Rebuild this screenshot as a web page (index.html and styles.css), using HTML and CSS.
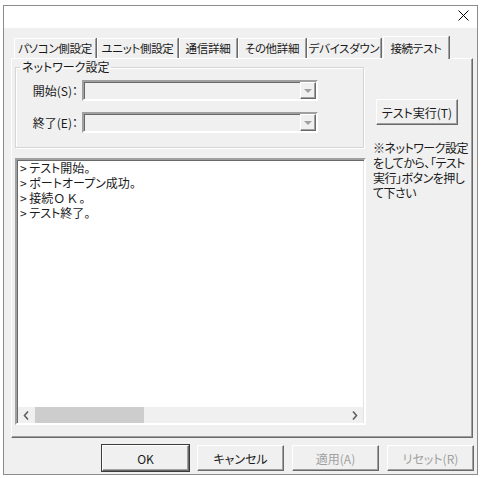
FILE: index.html
```html
<!DOCTYPE HTML>
<html>
<head>
    <meta charset="utf-8">
    <title>接続テスト</title>
    <link rel="stylesheet" href="styles.css">
</head>
<body>
<div class="window">
    <div class="titlebar">
        <div class="close">
            <svg width="11" height="11" viewBox="0 0 11 11">
                <path d="M 0.5,0.5 L 10.5,10.5 M 10.5,0.5 L 0.5,10.5" stroke="#000" stroke-width="1"/>
            </svg>
        </div>
    </div>
    <div class="tabs">
        <div class="tab t-pc">パソコン側設定</div>
        <div class="tab t-unit">ユニット側設定</div>
        <div class="tab t-comm">通信詳細</div>
        <div class="tab t-other">その他詳細</div>
        <div class="tab t-down">デバイスダウン</div>
        <div class="tab t-test selected">接続テスト</div>
    </div>
    <div class="panel">
        <div class="left-col">
            <fieldset class="group">
                <legend>ネットワーク設定</legend>
                <div class="row">
                    <span class="label">開始(S)：</span>
                    <div class="combo"><div class="drop"><span class="arrow"></span></div></div>
                </div>
                <div class="row">
                    <span class="label">終了(E)：</span>
                    <div class="combo"><div class="drop"><span class="arrow"></span></div></div>
                </div>
            </fieldset>
            <div class="log">
                <div class="log-text">
                    <div>&gt; テスト開始。</div>
                    <div>&gt; ポートオープン成功。</div>
                    <div>&gt; 接続<span class="fullwidth">ＯＫ</span>。</div>
                    <div>&gt; テスト終了。</div>
                </div>
                <div class="hscroll">
                    <div class="sbtn">
                        <svg width="7" height="9" viewBox="0 0 7 9"><path d="M 5,0.5 L 1.5,4.5 L 5,8.5" fill="none" stroke="#606060" stroke-width="1.6"/></svg>
                    </div>
                    <div class="track"><div class="thumb"></div></div>
                    <div class="sbtn">
                        <svg width="7" height="9" viewBox="0 0 7 9"><path d="M 2,0.5 L 5.5,4.5 L 2,8.5" fill="none" stroke="#606060" stroke-width="1.6"/></svg>
                    </div>
                </div>
            </div>
        </div>
        <div class="right-col">
            <button class="btn run" type="button">テスト実行(T)</button>
            <p class="note">※ネットワーク設定<br>をしてから、「テスト<br>実行」ボタンを押し<br>て下さい</p>
        </div>
    </div>
    <div class="footer">
        <button class="btn default" type="button">OK</button>
        <button class="btn" type="button">キャンセル</button>
        <button class="btn" type="button" disabled>適用(A)</button>
        <button class="btn" type="button" disabled>リセット(R)</button>
    </div>
</div>
</body>
</html>
```

FILE: styles.css
```css
body, html {
    margin: 0;
    padding: 0;
    background-color: #ffffff;
    color: #1a1a1a;
    font-family: "Noto Sans CJK JP", sans-serif;
    font-size: 12px;
    font-feature-settings: "palt";
}

.window {
    margin: 5px 0 0 3px;
    width: 473px;
    height: 468px;
    border: 1px solid #8c8c8c;
    background-color: #f0f0f0;
    display: flex;
    flex-direction: column;
}

.titlebar {
    height: 22px;
    background-color: #ffffff;
    display: flex;
    justify-content: flex-end;
}

.close {
    width: 28px;
    padding-top: 4px;
    display: flex;
    justify-content: center;
    align-items: flex-start;
}

.close svg {
    display: block;
}

/* tab strip */
.tabs {
    display: flex;
    align-items: flex-end;
    height: 22px;
    padding-top: 8px;
    margin-left: 10px;
    position: relative;
    z-index: 1;
}

.tab {
    box-sizing: border-box;
    height: 20px;
    line-height: 19px;
    font-size: 11.5px;
    text-align: center;
    letter-spacing: -0.3px;
    border-top: 1px solid #ffffff;
    border-left: 1px solid #ffffff;
    border-right: 1px solid #a0a0a0;
    box-shadow: 1px 0 0 #696969;
    margin-right: 1px;
    white-space: nowrap;
}

.t-pc { width: 82px; }
.t-unit { width: 81px; }
.t-comm { width: 58px; }
.t-other { width: 68px; }
.t-down { width: 74px; }
.t-test { width: 66px; }

.tab.selected {
    height: 23px;
    line-height: 22px;
    margin-left: 1px;
    margin-bottom: -1px;
    background-color: #f0f0f0;
}

/* tab page */
.panel {
    margin: 0 4px 0 7px;
    height: 371px;
    border-top: 1px solid #ffffff;
    border-left: 1px solid #ffffff;
    border-right: 1px solid #696969;
    border-bottom: 1px solid #696969;
    box-shadow: inset -1px -1px 0 #a0a0a0;
    padding: 1px 2px 6px 3px;
    display: flex;
}

.left-col {
    width: 351px;
    display: flex;
    flex-direction: column;
}

.group {
    margin: 0;
    width: 349px;
    height: 88px;
    box-sizing: border-box;
    padding: 6px 0 0 0;
    border: 1px solid #d5d5d5;
    box-shadow: inset 1px 1px 0 #ffffff, 1px 1px 0 #ffffff;
}

.group legend {
    padding: 0 2px;
    margin-left: 4px;
    line-height: 14px;
}

.row {
    display: flex;
    align-items: center;
    height: 21px;
    margin-bottom: 11px;
}

.label {
    width: 62px;
    padding-right: 4px;
    text-align: right;
}

.combo {
    width: 236px;
    height: 21px;
    box-sizing: border-box;
    border: 2px solid;
    border-color: #a0a0a0 #ffffff #ffffff #a0a0a0;
    box-shadow: inset 1px 1px 0 #696969;
    background-color: #f0f0f0;
    display: flex;
    justify-content: flex-end;
}

.drop {
    width: 16px;
    height: 17px;
    box-sizing: border-box;
    border-top: 1px solid #ffffff;
    border-left: 1px solid #ffffff;
    border-right: 1px solid #696969;
    border-bottom: 1px solid #696969;
    box-shadow: inset -1px -1px 0 #a0a0a0;
    display: flex;
    justify-content: center;
    align-items: center;
}

.arrow {
    width: 0;
    height: 0;
    border-left: 4px solid transparent;
    border-right: 4px solid transparent;
    border-top: 4px solid #a0a0a0;
}

/* log */
.log {
    margin-top: 10px;
    width: 351px;
    height: 267px;
    box-sizing: border-box;
    border: 2px solid;
    border-color: #a0a0a0 #ffffff #ffffff #a0a0a0;
    box-shadow: inset 1px 1px 0 #696969, inset -1px -1px 0 #e3e3e3;
    background-color: #ffffff;
    display: flex;
    flex-direction: column;
}

.log-text {
    flex: 1;
    padding: 0 0 0 3px;
    line-height: 15px;
}

.fullwidth {
    font-feature-settings: normal;
    letter-spacing: 1px;
}

.hscroll {
    height: 16px;
    margin: 0 1px 0 1px;
    background-color: #f0f0f0;
    display: flex;
}

.sbtn {
    width: 17px;
    display: flex;
    justify-content: center;
    align-items: center;
}

.track {
    flex: 1;
}

.thumb {
    width: 109px;
    height: 16px;
    background-color: #cdcdcd;
}

/* right side */
.right-col {
    width: 98px;
    margin-left: 6px;
}

.btn {
    font-family: "Noto Sans CJK JP", sans-serif;
    font-size: 12px;
    font-feature-settings: "palt";
    color: #1a1a1a;
    background-color: #f0f0f0;
    border-top: 1px solid #ffffff;
    border-left: 1px solid #ffffff;
    border-right: 1px solid #696969;
    border-bottom: 1px solid #696969;
    box-shadow: inset -1px -1px 0 #a0a0a0;
    padding: 0;
    margin: 0;
    outline: none;
}

.btn:disabled {
    color: #a0a0a0;
}

.run {
    margin: 39px 0 0 4px;
    width: 82px;
    height: 26px;
}

.note {
    margin: 15px 0 0 1px;
    line-height: 15px;
    white-space: nowrap;
    letter-spacing: -0.5px;
}

.footer {
    display: flex;
    justify-content: flex-end;
    gap: 8px;
    padding: 7px 3px 0 0;
}

.footer .btn {
    width: 87px;
    height: 26px;
}

.btn.default {
    outline: 1px solid #3c3c3c;
    outline-offset: 0;
}
```
